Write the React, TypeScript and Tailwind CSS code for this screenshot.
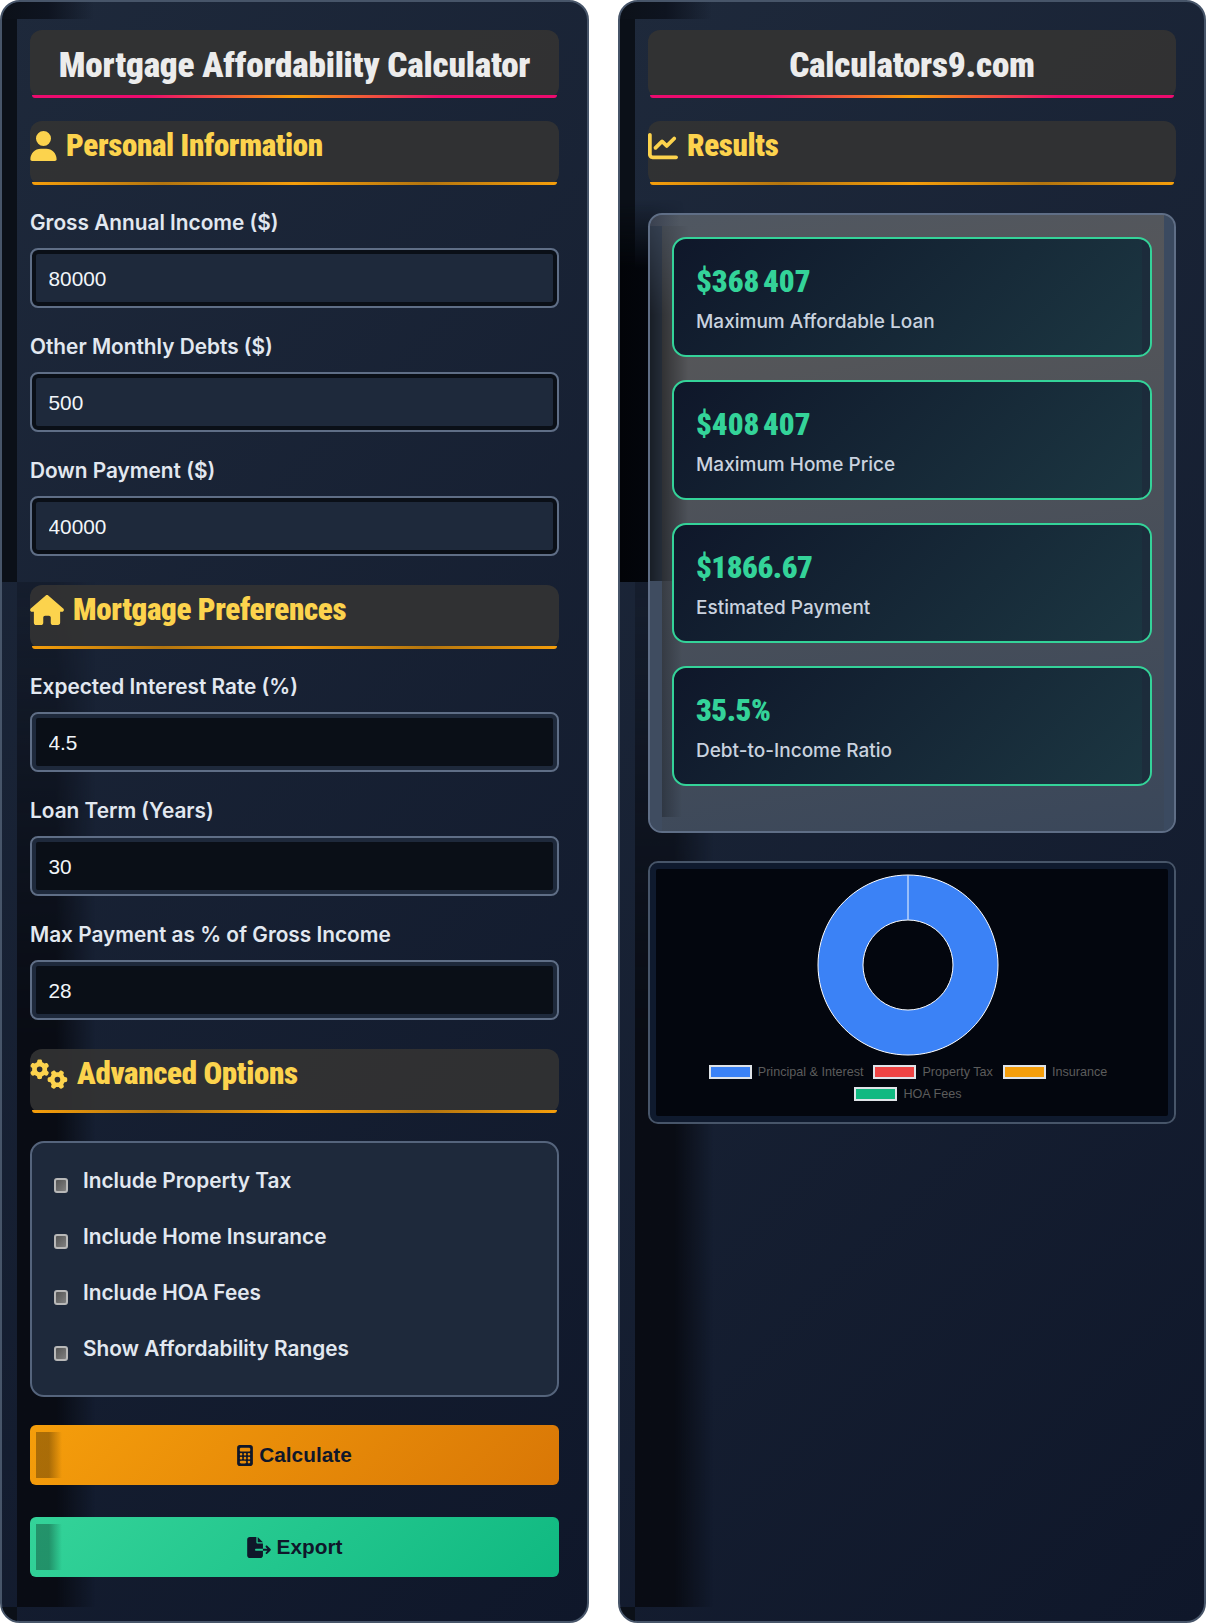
import type React from 'react';
import { FaCalculator, FaChartLine, FaFileExport, FaGears, FaHouse, FaUser } from 'react-icons/fa6';

const headingFont = "font-['Roboto',sans-serif] font-black [font-stretch:75%]";

const PanelGlitch = () => (
  <>
    <div className="absolute left-0 top-0 h-[17px] w-[92px] rounded-tl-[18px] bg-gradient-to-r from-[#0c1119] via-[#0e1420] to-transparent" />
    <div className="absolute left-0 top-[17px] h-[563px] w-[15px] bg-[#0b1018]" />
    <div className="absolute left-[15px] top-[580px] bottom-[14px] w-[78px] bg-gradient-to-r from-[#090c14] via-[#090c14] to-transparent [mask-image:linear-gradient(to_bottom,rgba(0,0,0,0.25),black_45%)]" />
    <div className="absolute left-0 bottom-0 h-[14px] w-[15px] rounded-bl-[18px] bg-[#0b1018]" />
  </>
);

const Panel = ({ children }: { children: React.ReactNode }) => (
  <div className="relative h-[1623px] overflow-hidden rounded-[20px] border-2 border-[#475569] bg-[linear-gradient(135deg,#1e293b,#0f172a)] p-[28px]">
    <PanelGlitch />
    <div className="relative">{children}</div>
  </div>
);

const TitleBar = ({ children }: { children: React.ReactNode }) => (
  <div className="relative mb-[23px] flex h-[68px] items-center justify-center rounded-[12px] bg-[#333333]/95 pt-[3px]">
    <h1 className={`${headingFont} text-[35.2px] leading-none tracking-[-0.2px] text-[#ececec]`}>{children}</h1>
    <div className="absolute bottom-0 left-[2px] right-[2px] h-[3px] rounded-b-[6px] bg-[linear-gradient(90deg,#ec0b6e_22%,#f59e0b_50%,#ec0b6e_78%)]" />
  </div>
);

const SectionBar = ({ icon, title }: { icon: React.ReactNode; title: string }) => (
  <div className="relative mb-[28px] h-[64px] rounded-[12px] bg-[#333333]/90">
    <h2 className={`${headingFont} flex items-center gap-[9px] pt-[9px] text-[31px] leading-[32px] tracking-[-0.35px] text-[#fcd34d]`}>
      {icon}
      {title}
    </h2>
    <div className="absolute bottom-0 left-[2px] right-[2px] h-[3px] rounded-b-[6px] bg-[linear-gradient(90deg,#f59e0b,#b3750f_25%,#f59e0b_50%,#b3750f_75%,#f59e0b)]" />
  </div>
);

const Field = ({ label, value, sunken }: { label: string; value: string; sunken?: boolean }) => (
  <div className="mb-[29px]">
    <label className="mb-[15px] block h-[20px] font-['Inter',sans-serif] text-[20.8px] font-semibold leading-[20px] text-[#e2e8f0]">
      {label}
    </label>
    <input
      readOnly
      value={value}
      className={`block h-[60px] w-full rounded-[8px] border-2 border-[#5f6e86] px-[16.5px] pt-[2px] font-['Liberation_Sans',sans-serif] text-[20.8px] text-[#f1f5f9] outline-none ${
        sunken
          ? 'bg-[#0a0f17] shadow-[inset_0_0_0_4px_#1e293b]'
          : 'bg-[#1e293b] shadow-[inset_0_0_0_4px_#0a0f17]'
      }`}
    />
  </div>
);

const CheckRow = ({ label }: { label: string }) => (
  <label className="flex h-[56px] items-center gap-[15px] font-['Inter',sans-serif] text-[20.8px] font-semibold text-[#e2e8f0]">
    <input
      type="checkbox"
      readOnly
      className="mt-[6px] h-[15px] w-[14px] appearance-none rounded-[3px] border-2 border-[#b8b8b8] bg-gradient-to-br from-[#555555] to-[#808080]"
    />
    <span className="-mt-[3px]">{label}</span>
  </label>
);

const ActionButton = ({ tone, icon, children, gap }: { tone: string; icon: React.ReactNode; children: React.ReactNode; gap: string }) => (
  <button
    type="button"
    className={`relative flex h-[60px] w-full items-center justify-center gap-[6px] overflow-hidden rounded-[6px] font-['Liberation_Sans',sans-serif] text-[20.8px] font-bold text-[#0f172a] ${tone} ${gap}`}
  >
    <span className="absolute bottom-[7px] left-[6px] top-[7px] w-[26px] bg-gradient-to-r from-black/30 via-black/30 to-transparent" />
    {icon}
    {children}
  </button>
);

const ResultCard = ({ value, label }: { value: string; label: string }) => (
  <div className="relative mb-[23px] h-[120px] overflow-hidden rounded-[14px] border-2 border-[#34d399] bg-[linear-gradient(135deg,#0f172a,#1c3742)] px-[22px] pt-[25px]">
    <div className="absolute inset-y-0 right-0 w-[8px] bg-[#1e293b]/70" />
    <div className={`${headingFont} relative text-[31px] leading-[36px] tracking-[-0.5px] text-[#34d399]`}>{value}</div>
    <div className="relative mt-[8px] font-['Inter',sans-serif] text-[19px] font-medium leading-[28px] text-[#c9d2df]">{label}</div>
  </div>
);

const LegendItem = ({ color, label }: { color: string; label: string }) => (
  <span className="flex items-center gap-[6px]">
    <span className={`h-[14px] w-[43px] border-2 border-[#dfe3e8] ${color}`} />
    {label}
  </span>
);

const Donut = () => (
  <svg width="184" height="184" viewBox="0 0 184 184" className="mx-auto">
    <path
      d="M92 2a90 90 0 1 0 .01 0ZM92 47a45 45 0 1 1-.01 0Z"
      fill="#3b82f6"
      fillRule="evenodd"
      stroke="#ffffff"
      strokeWidth="1"
    />
    <path d="M92 2V47" stroke="#b9d2fb" strokeWidth="1.5" />
  </svg>
);

export default function App() {
  return (
    <div className="grid h-[1623px] w-[1206px] grid-cols-[589px_588px] gap-[29px] overflow-hidden bg-white">
      <Panel>
        <TitleBar>Mortgage Affordability Calculator</TitleBar>
        <SectionBar icon={<FaUser className="h-[30px] w-[27px]" />} title="Personal Information" />
        <Field label="Gross Annual Income ($)" value="80000" />
        <Field label="Other Monthly Debts ($)" value="500" />
        <Field label="Down Payment ($)" value="40000" />
        <SectionBar icon={<FaHouse className="h-[30px] w-[34px]" />} title="Mortgage Preferences" />
        <Field label="Expected Interest Rate (%)" value="4.5" sunken />
        <Field label="Loan Term (Years)" value="30" sunken />
        <Field label="Max Payment as % of Gross Income" value="28" sunken />
        <SectionBar icon={<FaGears className="h-[30px] w-[38px]" />} title="Advanced Options" />
        <div className="mb-[28px] h-[256px] rounded-[14px] border-2 border-[#55647c] bg-[#1e293b] px-[22px] pt-[11px]">
          <CheckRow label="Include Property Tax" />
          <CheckRow label="Include Home Insurance" />
          <CheckRow label="Include HOA Fees" />
          <CheckRow label="Show Affordability Ranges" />
        </div>
        <ActionButton
          tone="bg-[linear-gradient(135deg,#f59e0b,#d97706)]"
          gap="mb-[32px]"
          icon={<FaCalculator className="h-[21px] w-[16px]" />}
        >
          Calculate
        </ActionButton>
        <ActionButton
          tone="bg-[linear-gradient(135deg,#34d399,#10b981)]"
          gap=""
          icon={<FaFileExport className="h-[21px] w-[24px]" />}
        >
          Export
        </ActionButton>
      </Panel>
      <Panel>
        <div className="absolute -left-[28px] top-[170px] h-[382px] w-[64px] bg-gradient-to-r from-[#020408] via-[#03060c] to-transparent [mask-image:linear-gradient(to_bottom,transparent,black_18%)]" />
        <TitleBar>Calculators9.com</TitleBar>
        <SectionBar icon={<FaChartLine className="h-[30px] w-[30px]" />} title="Results" />
        <div className="relative mb-[28px] h-[620px] overflow-hidden rounded-[14px] border-2 border-[#5f6e86] bg-[linear-gradient(170deg,#4f5762,#555659_20%,#3a475a)] px-[22px] pt-[22px]">
          <div className="absolute inset-y-0 right-0 w-[10px] bg-[#3b4a60]" />
          <div className="absolute bottom-0 left-0 top-[11px] w-[12px] bg-[#3f4c60]" />
          <div className="absolute left-0 top-0 h-[11px] w-[30px] bg-gradient-to-r from-[#3a4150] to-transparent" />
          <div className="absolute left-0 top-[11px] h-[355px] w-[38px] bg-gradient-to-r from-black/60 via-black/30 to-transparent [mask-image:linear-gradient(to_bottom,rgba(0,0,0,0.4),black_25%)]" />
          <div className="absolute bottom-[14px] left-[12px] top-[366px] w-[20px] bg-gradient-to-r from-black/25 to-transparent" />
          <div className="relative">
            <ResultCard value={'$368\u202f407'} label="Maximum Affordable Loan" />
            <ResultCard value={'$408\u202f407'} label="Maximum Home Price" />
            <ResultCard value="$1866.67" label="Estimated Payment" />
            <ResultCard value="35.5%" label="Debt-to-Income Ratio" />
          </div>
        </div>
        <div className="h-[263px] rounded-[10px] border-2 border-[#475569] bg-[#03060e] pt-[10px] shadow-[inset_0_0_0_6px_#0f1a2e]">
          <div className="-ml-[8px]">
            <Donut />
          </div>
          <div className="mx-auto mt-[8px] flex w-[440px] flex-wrap justify-center gap-x-[10px] gap-y-[8px] pr-[8px] font-['Liberation_Sans',sans-serif] text-[12.6px] leading-[14px] text-[#5c5c5c]">
            <LegendItem color="bg-[#3b82f6]" label="Principal & Interest" />
            <LegendItem color="bg-[#ef4444]" label="Property Tax" />
            <LegendItem color="bg-[#f59e0b]" label="Insurance" />
            <LegendItem color="bg-[#10b981]" label="HOA Fees" />
          </div>
        </div>
      </Panel>
    </div>
  );
}
